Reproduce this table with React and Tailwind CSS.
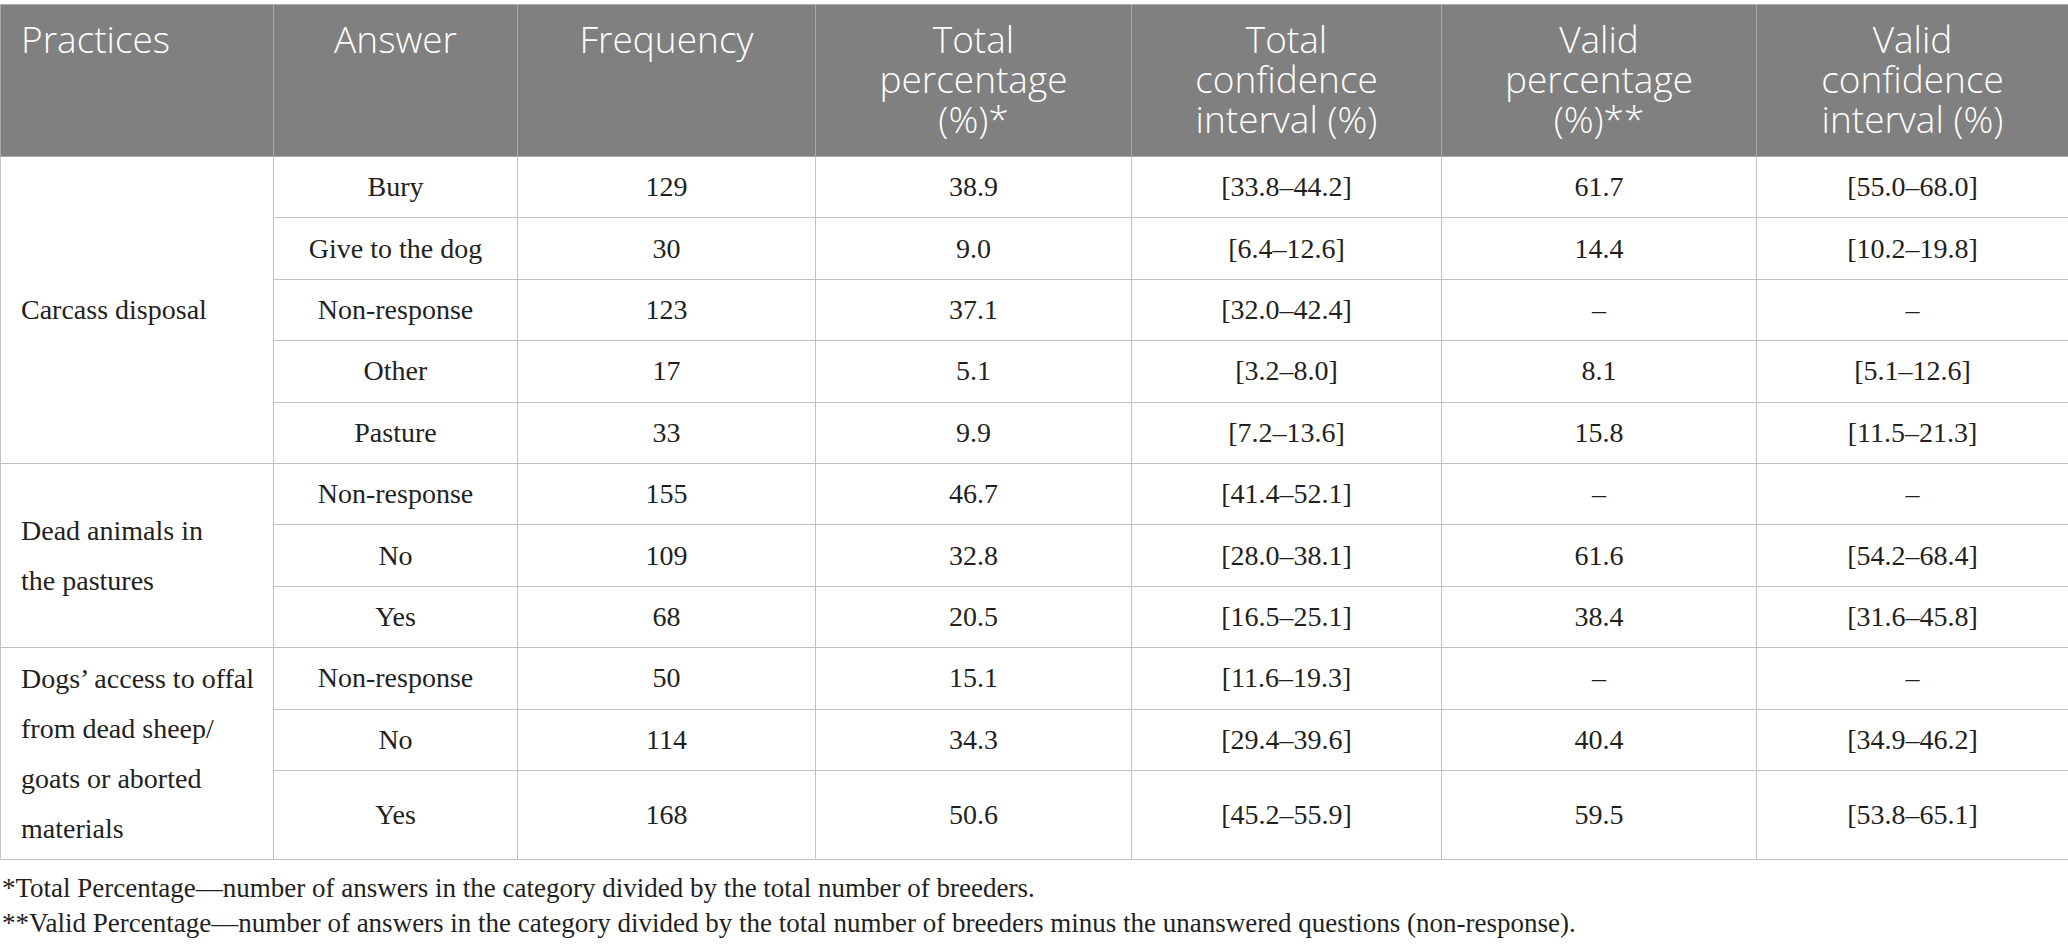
import React from "react";

const groups = [
  {
    practice: ["Carcass disposal"],
    rows: [
      ["Bury", "129", "38.9", "[33.8–44.2]", "61.7", "[55.0–68.0]"],
      ["Give to the dog", "30", "9.0", "[6.4–12.6]", "14.4", "[10.2–19.8]"],
      ["Non-response", "123", "37.1", "[32.0–42.4]", "–", "–"],
      ["Other", "17", "5.1", "[3.2–8.0]", "8.1", "[5.1–12.6]"],
      ["Pasture", "33", "9.9", "[7.2–13.6]", "15.8", "[11.5–21.3]"],
    ],
  },
  {
    practice: ["Dead animals in", "the pastures"],
    rows: [
      ["Non-response", "155", "46.7", "[41.4–52.1]", "–", "–"],
      ["No", "109", "32.8", "[28.0–38.1]", "61.6", "[54.2–68.4]"],
      ["Yes", "68", "20.5", "[16.5–25.1]", "38.4", "[31.6–45.8]"],
    ],
  },
  {
    practice: ["Dogs’ access to offal", "from dead sheep/", "goats or aborted", "materials"],
    rows: [
      ["Non-response", "50", "15.1", "[11.6–19.3]", "–", "–"],
      ["No", "114", "34.3", "[29.4–39.6]", "40.4", "[34.9–46.2]"],
      ["Yes", "168", "50.6", "[45.2–55.9]", "59.5", "[53.8–65.1]"],
    ],
  },
];

const headers = [
  ["Practices"],
  ["Answer"],
  ["Frequency"],
  ["Total", "percentage", "(%)*"],
  ["Total", "confidence", "interval (%)"],
  ["Valid", "percentage", "(%)**"],
  ["Valid", "confidence", "interval (%)"],
];

const widths = ["w-[273px]", "w-[244px]", "w-[298px]", "w-[316px]", "w-[310px]", "w-[315px]", "w-[312px]"];

export default function App() {
  return (
    <div className="w-[2068px] min-h-[950px] bg-white pt-[4px]">
      <table className="w-[2068px] table-fixed border-collapse border border-[#c2c2c2] font-['Liberation_Serif',serif] text-[28px] text-[#231f20]">
        <colgroup>
          {widths.map((w) => (
            <col key={w} className={w} />
          ))}
        </colgroup>
        <thead>
          <tr className="bg-[#808080]">
            {headers.map((lines, i) => (
              <th
                key={i}
                className={`border border-[#a9a9a9] px-[20px] pt-[14px] pb-[17px] align-top font-['Open_Sans',sans-serif] text-[37px] font-light leading-[40px] text-white ${
                  i === 0 ? "text-left" : "text-center"
                }`}
              >
                {lines.map((l, j) => (
                  <div key={j} className="whitespace-nowrap">
                    {l}
                  </div>
                ))}
              </th>
            ))}
          </tr>
        </thead>
        <tbody>
          {groups.map((g, gi) =>
            g.rows.map((r, ri) => {
              const lastTall = gi === 2 && ri === 2;
              return (
                <tr key={`${gi}-${ri}`} className={lastTall ? "h-[89px]" : "h-[61.4px]"}>
                  {ri === 0 && (
                    <td
                      rowSpan={g.rows.length}
                      className="border border-[#c2c2c2] pl-[20px] pr-[10px] py-[5px] align-middle text-left leading-[50px]"
                    >
                      {g.practice.map((l, j) => (
                        <div key={j} className="whitespace-nowrap">
                          {l}
                        </div>
                      ))}
                    </td>
                  )}
                  {r.map((c, ci) => (
                    <td
                      key={ci}
                      className="border border-[#c2c2c2] px-[10px] py-[5px] text-center align-middle leading-[50px] whitespace-nowrap"
                    >
                      {c}
                    </td>
                  ))}
                </tr>
              );
            })
          )}
        </tbody>
      </table>
      <div className="mt-[11px] pl-[2px] font-['Liberation_Serif',serif] text-[27px] leading-[35px] text-[#231f20]">
        <p>*Total Percentage—number of answers in the category divided by the total number of breeders.</p>
        <p>
          **Valid Percentage—number of answers in the category divided by the total number of breeders minus the
          unanswered questions (non-response).
        </p>
      </div>
    </div>
  );
}
